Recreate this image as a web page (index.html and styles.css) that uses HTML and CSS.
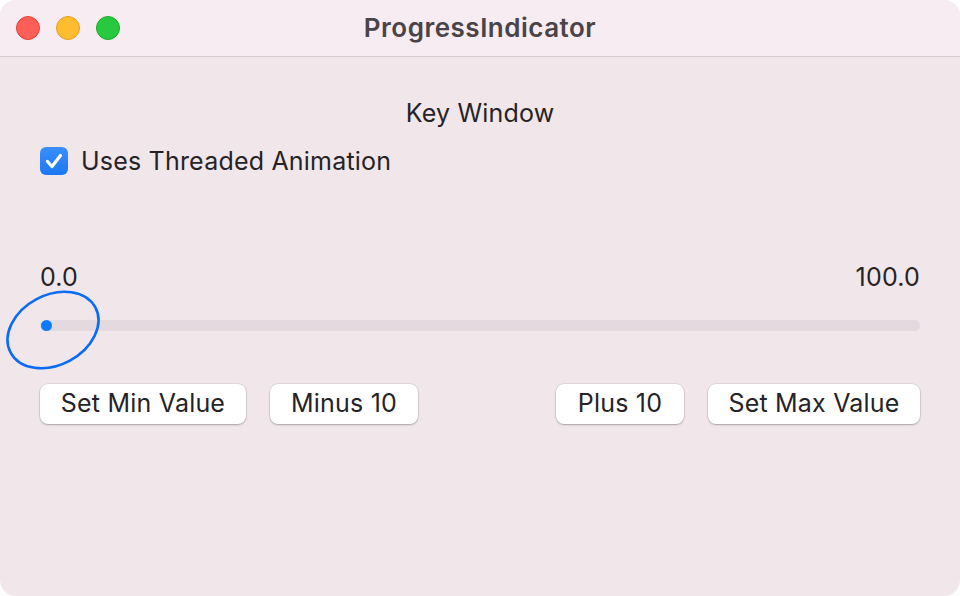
FILE: index.html
```html
<!DOCTYPE html>
<html>
<head>
<meta charset="utf-8">
<link rel="stylesheet" href="styles.css">
</head>
<body>
<div class="window">
  <div class="titlebar">
    <div class="lights">
      <span class="light red"></span>
      <span class="light yellow"></span>
      <span class="light green"></span>
    </div>
    <div class="title">ProgressIndicator</div>
  </div>
  <div class="content">
    <div class="key">Key Window</div>
    <label class="check-row">
      <span class="checkbox">
        <svg viewBox="0 0 28 28" width="28" height="28"><path d="M7.5 14.5 L12 19.5 L20.5 8.5" fill="none" stroke="#fff" stroke-width="3.2" stroke-linecap="round" stroke-linejoin="round"/></svg>
      </span>
      <span>Uses Threaded Animation</span>
    </label>
    <div class="range-labels">
      <span>0.0</span>
      <span>100.0</span>
    </div>
    <div class="track">
      <span class="dot"></span>
    </div>
    <div class="buttons">
      <div class="group">
        <button class="btn btn-setmin">Set Min Value</button>
        <button class="btn btn-minus">Minus 10</button>
      </div>
      <div class="group">
        <button class="btn btn-plus">Plus 10</button>
        <button class="btn btn-setmax">Set Max Value</button>
      </div>
    </div>
    <svg class="scribble" viewBox="0 0 110 90" width="110" height="90">
      <ellipse cx="53" cy="45" rx="48" ry="35" transform="rotate(-28 53 45)" fill="none" stroke="#0a6cf5" stroke-width="2.6"/>
    </svg>
  </div>
</div>
</body>
</html>
```
FILE: styles.css
```css
* { box-sizing: border-box; }
html, body { margin: 0; padding: 0; background: #ffffff; }
body {
  font-family: Inter, "Noto Sans", "Liberation Sans", sans-serif;
  color: #262326;
}
.window {
  width: 960px;
  height: 596px;
  border-radius: 16px;
  overflow: hidden;
  background: #f1e7eb;
  display: flex;
  flex-direction: column;
}
.titlebar {
  height: 57px;
  flex: none;
  background: #f6ecf1;
  border-bottom: 1px solid #d6cbd0;
  display: flex;
  align-items: center;
  justify-content: center;
  position: relative;
}
.lights {
  position: absolute;
  left: 16px;
  top: 16px;
  display: flex;
  gap: 16px;
}
.light {
  width: 24px;
  height: 24px;
  border-radius: 50%;
  display: block;
}
.red { background: #ff5f57; border: 1px solid #e0443e; }
.yellow { background: #febc2e; border: 1px solid #dea123; }
.green { background: #28c840; border: 1px solid #1aab29; }
.title {
  font-size: 26px;
  font-weight: 600;
  color: #4a4448;
  letter-spacing: 0.5px;
  margin-top: -2px;
}
.content {
  position: relative;
  flex: 1;
  padding: 42px 40px 0 40px;
  display: flex;
  flex-direction: column;
  letter-spacing: 0.2px;
}
.key {
  text-align: center;
  font-size: 25px;
  line-height: 28px;
  height: 28px;
}
.check-row {
  margin-top: 20px;
  display: flex;
  align-items: center;
  gap: 13px;
  font-size: 25px;
  line-height: 28px;
}
.checkbox {
  width: 28px;
  height: 28px;
  border-radius: 6px;
  background: linear-gradient(#3c8ffb, #1a78f2);
  display: flex;
}
.range-labels {
  margin-top: 88px;
  display: flex;
  justify-content: space-between;
  font-size: 25px;
  line-height: 28px;
}
.track {
  margin-top: 29px;
  height: 11px;
  border-radius: 6px;
  background: #e3d9de;
  position: relative;
}
.dot {
  position: absolute;
  left: 0.5px;
  top: 0;
  width: 11px;
  height: 11px;
  border-radius: 50%;
  background: #0a7bff;
}
.buttons {
  margin-top: 53px;
  display: flex;
  justify-content: space-between;
}
.group {
  display: flex;
  gap: 24px;
}
.btn {
  height: 40px;
  border: none;
  border-radius: 8px;
  background: #ffffff;
  box-shadow: 0 0 0 0.5px rgba(0,0,0,0.12), 0 1px 2px rgba(0,0,0,0.25);
  font-family: inherit;
  font-size: 25px;
  letter-spacing: 0.2px;
  line-height: 38px;
  color: #262326;
  padding: 0 0 2px 0;
}
.btn-setmin { width: 206px; }
.btn-minus { width: 148px; }
.btn-plus { width: 128px; }
.btn-setmax { width: 212px; }
.scribble {
  position: absolute;
  left: 0;
  top: 228px;
}
```
